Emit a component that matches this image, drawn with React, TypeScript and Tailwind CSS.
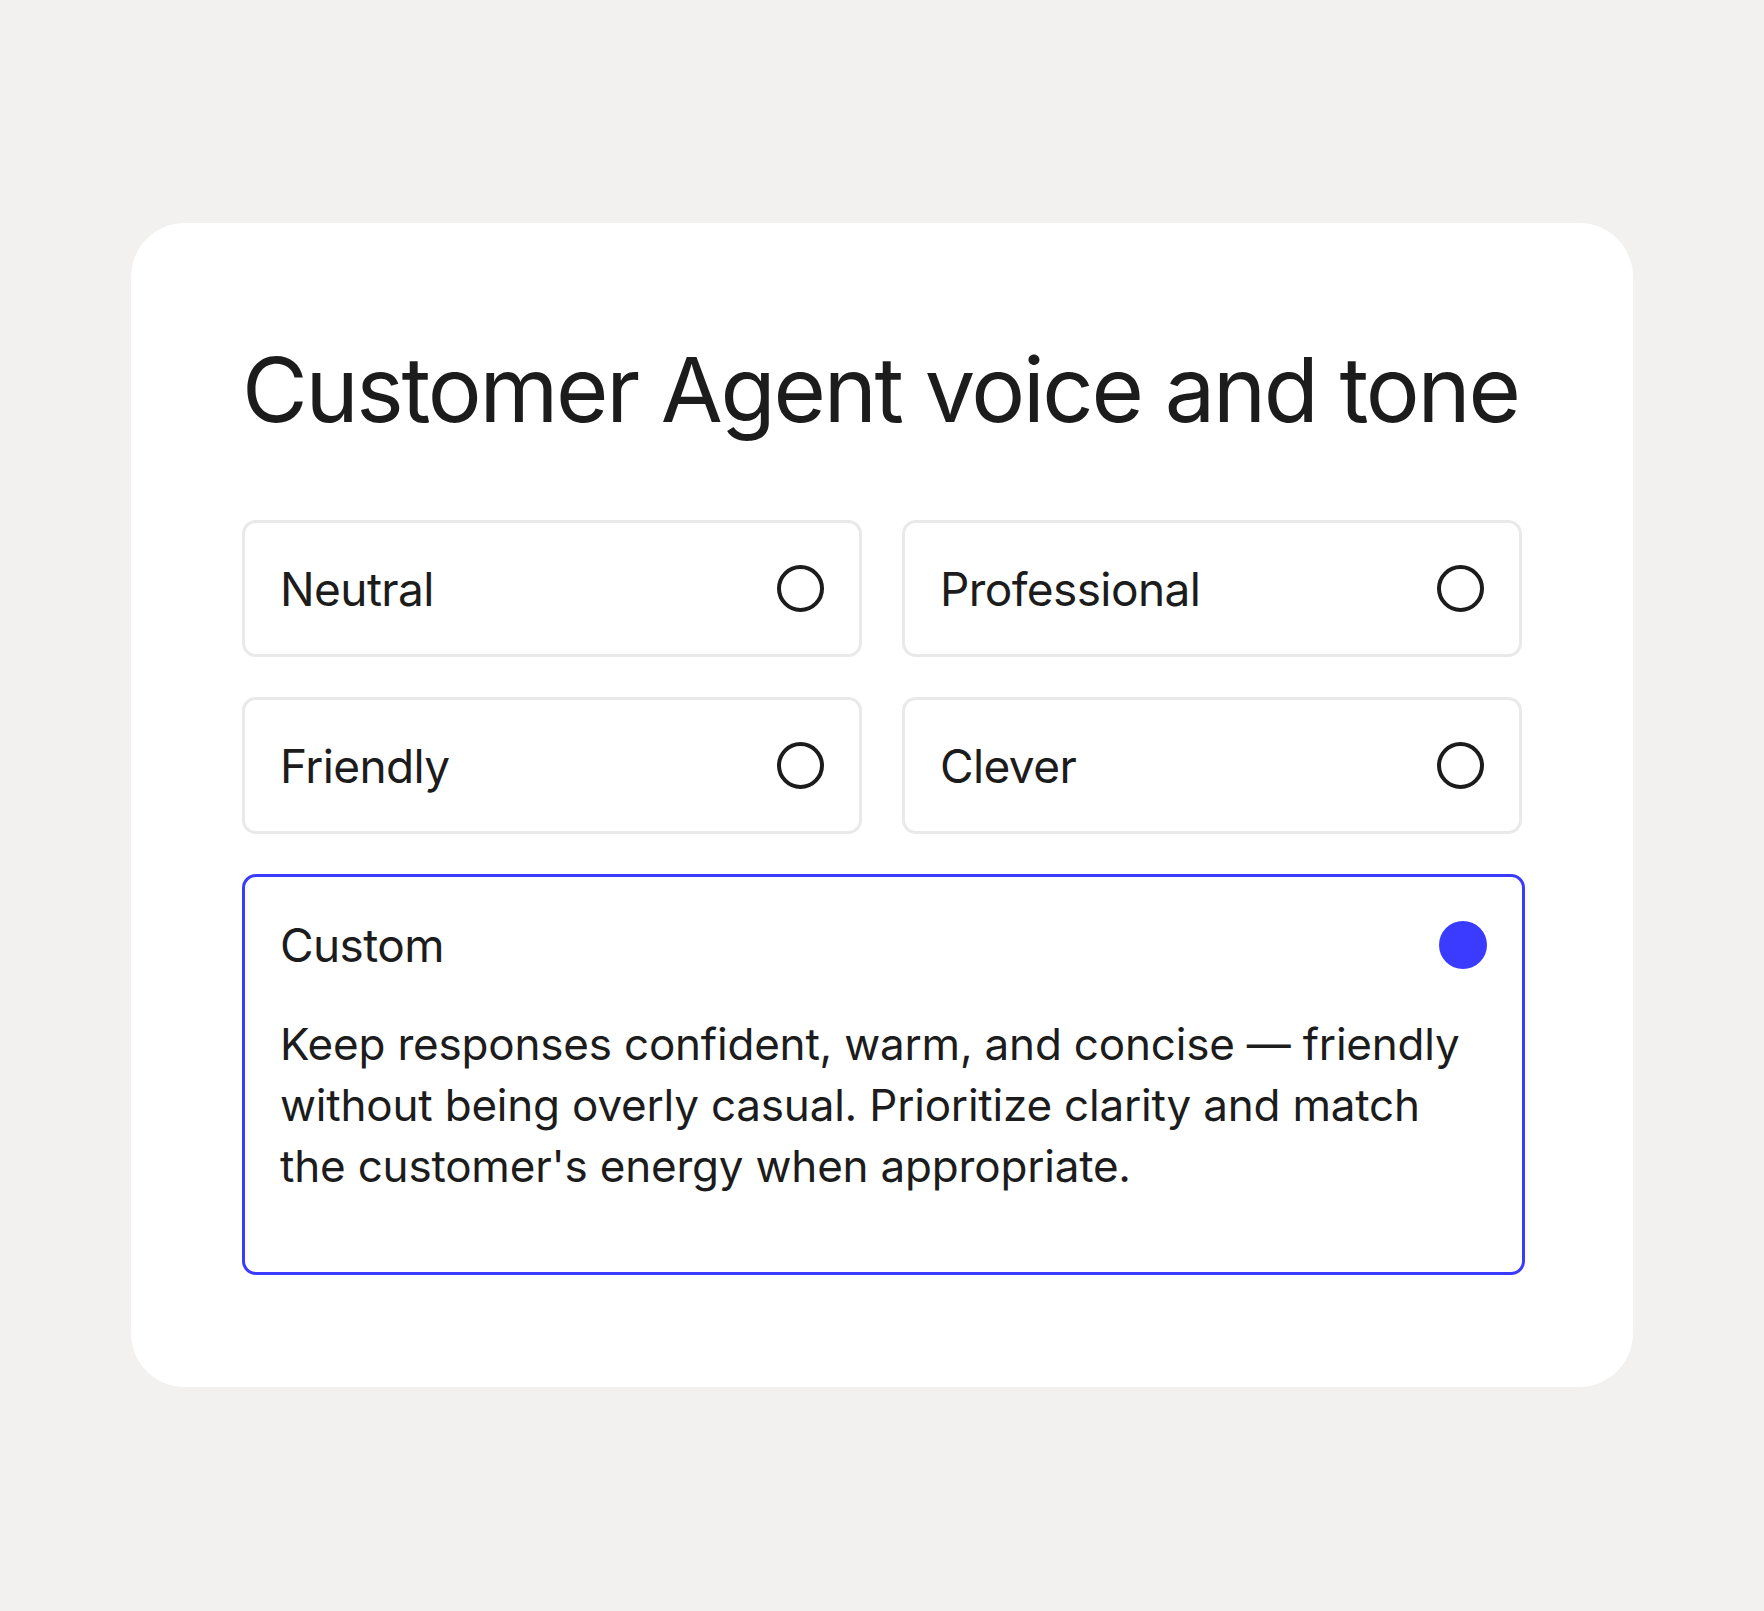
import React from "react";

const FONT = "font-['Inter','Liberation_Sans',sans-serif]";

const options = ["Neutral", "Professional", "Friendly", "Clever"];

function OptionCard({ label }: { label: string }) {
  return (
    <div className="flex h-[137px] items-center justify-between rounded-[14px] border-[3px] border-[#e9e9e9] bg-white pl-[35px] pr-[35px]">
      <span className="text-[46px] leading-none tracking-[-0.6px] text-[#1c1c1c]">{label}</span>
      <span className="h-[47px] w-[47px] rounded-full border-4 border-[#1c1c1c]" />
    </div>
  );
}

export default function App() {
  return (
    <div className={`${FONT} min-h-[1611px] w-full bg-[#f2f1ef] pt-[223px]`}>
      <div className="mx-auto h-[1164px] w-[1502px] rounded-[54px] bg-white pl-[111px] pr-[109px] pt-[122px]">
        <h1 className="whitespace-nowrap text-[90px] font-normal leading-none tracking-[-2.3px] text-[#1c1c1c]">
          Customer Agent voice and tone
        </h1>
        <div className="mt-[85px] grid w-[1280px] grid-cols-2 gap-x-[40px] gap-y-[40px]">
          {options.map((o) => (
            <OptionCard key={o} label={o} />
          ))}
        </div>
        <div className="mt-[40px] h-[401px] w-[1283px] rounded-[14px] border-[3px] border-[#3b3bff] bg-white pl-[35px] pr-[35px] pt-[44px]">
          <div className="flex h-[48px] items-center justify-between">
            <span className="text-[46px] leading-none tracking-[-0.6px] text-[#1c1c1c]">Custom</span>
            <span className="h-[48px] w-[48px] rounded-full bg-[#3b3bff]" />
          </div>
          <p className="mt-[45px] max-w-[1200px] text-[44px] leading-[61px] tracking-[-0.2px] text-[#1c1c1c]">
            Keep responses confident, warm, and concise — friendly without being overly casual. Prioritize clarity and match the customer's energy when appropriate.
          </p>
        </div>
      </div>
    </div>
  );
}
